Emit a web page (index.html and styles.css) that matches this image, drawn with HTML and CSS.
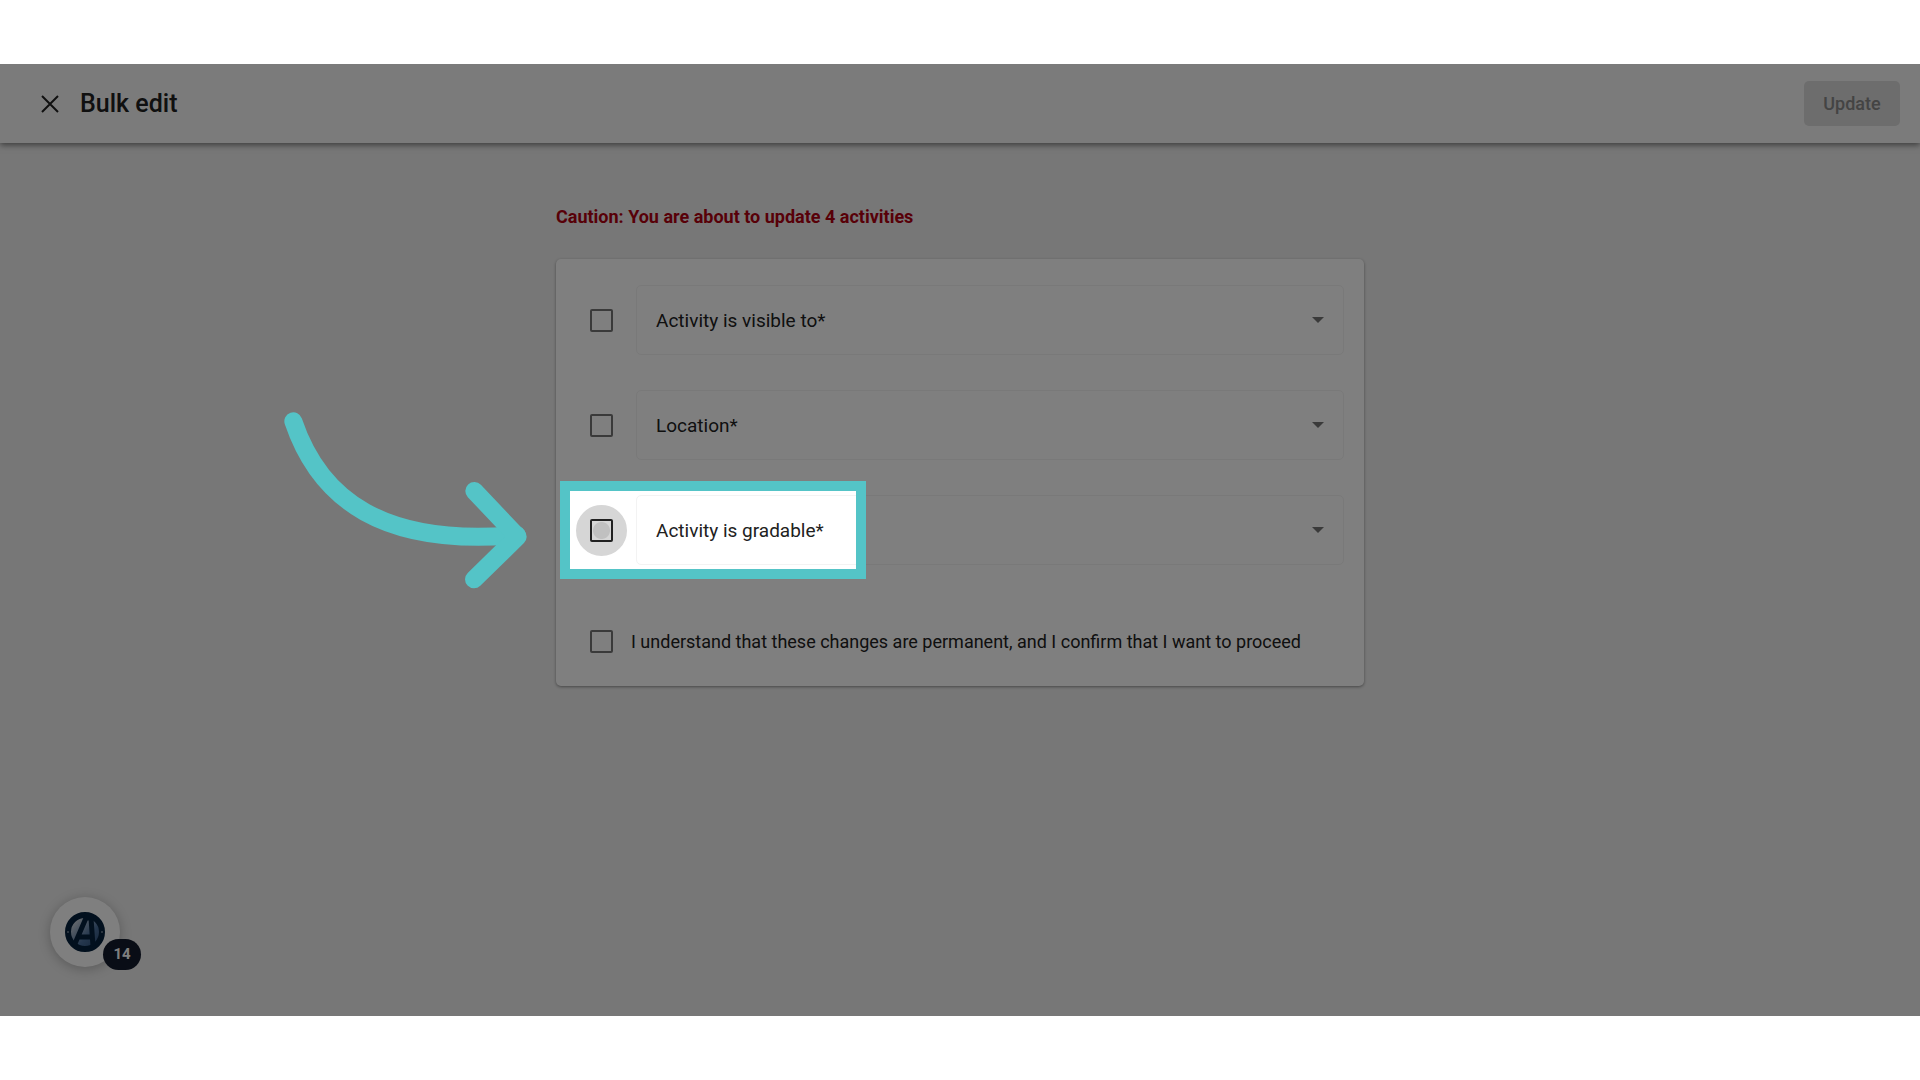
FILE: index.html
```html
<!DOCTYPE html>
<html lang="en">
<head>
<meta charset="utf-8">
<meta name="viewport" content="width=device-width, initial-scale=1">
<title>Bulk edit</title>
<link rel="stylesheet" href="styles.css">
</head>
<body>
<div class="stage">
  <header class="topbar">
    <button class="close" type="button" aria-label="Close">
      <svg viewBox="0 0 20 20" width="20" height="20" fill="none" stroke="currentColor" stroke-width="2"><path d="M2 2l16 16M18 2L2 18"/></svg>
    </button>
    <h1 class="title">Bulk edit</h1>
    <button class="update" type="button" disabled>Update</button>
  </header>
  <main class="content">
    <p class="caution">Caution: You are about to update 4 activities</p>
    <form class="card">
      <div class="row">
        <input class="check" type="checkbox" aria-label="Edit activity visibility">
        <div class="field">
          <select class="select" aria-label="Activity is visible to"><option>Activity is visible to*</option></select>
          <svg class="caret" viewBox="0 0 12 6" width="12" height="6"><path d="M0 0h12L6 6z" fill="currentColor"/></svg>
        </div>
      </div>
      <div class="row">
        <input class="check" type="checkbox" aria-label="Edit location">
        <div class="field">
          <select class="select" aria-label="Location"><option>Location*</option></select>
          <svg class="caret" viewBox="0 0 12 6" width="12" height="6"><path d="M0 0h12L6 6z" fill="currentColor"/></svg>
        </div>
      </div>
      <div class="row">
        <input class="check check-active" type="checkbox" aria-label="Edit gradable setting">
        <div class="field">
          <select class="select" aria-label="Activity is gradable"><option>Activity is gradable*</option></select>
          <svg class="caret" viewBox="0 0 12 6" width="12" height="6"><path d="M0 0h12L6 6z" fill="currentColor"/></svg>
        </div>
        <div class="spotlight"></div>
        <svg class="arrow" viewBox="0 0 810 600" width="270" height="200" fill="none" stroke="currentColor" stroke-width="54" stroke-linecap="round" stroke-linejoin="round">
          <path d="M70 64C150 300 340 440 740 405"/>
          <path d="M613 273L743 410L612 538"/>
        </svg>
      </div>
      <label class="confirm">
        <input class="check" type="checkbox">
        <span>I understand that these changes are permanent, and I confirm that I want to proceed</span>
      </label>
    </form>
  </main>
  <button class="helper" type="button" aria-label="Open help, 14 new">
    <svg viewBox="0 0 40 40" width="40" height="40">
      <defs><linearGradient id="disc" x1="0" y1="0" x2="1" y2="1"><stop offset="0.15" stop-color="#d5dae0"/><stop offset="0.6" stop-color="#4a6f9c"/><stop offset="1" stop-color="#24446c"/></linearGradient></defs>
      <circle cx="20" cy="20" r="17" fill="url(#disc)" stroke="#04203c" stroke-width="6"/>
      <path d="M9 34L21 6H26L28 34M14 25H27" fill="none" stroke="#04203c" stroke-width="5"/>
      <circle cx="3" cy="20" r="1" fill="#6f8296"/>
      <circle cx="37" cy="20" r="1" fill="#6f8296"/>
    </svg>
    <span class="count">14</span>
  </button>
</div>
</body>
</html>
```
FILE: styles.css
```css
* { box-sizing: border-box; }

body {
  margin: 0;
  padding: 64px 0;
  background: #fff;
  color: #212121;
  font-family: Roboto, "Liberation Sans", sans-serif;
  font-size: 18px;
}

button, select { font: inherit; }

.stage {
  position: relative;
  min-height: calc(100vh - 128px);
  overflow: hidden;
  background: #eee;
}

.topbar {
  display: flex;
  align-items: center;
  height: 79px;
  padding: 0 20px 0 40px;
  background: #f7f7f7;
  box-shadow: 0 2px 6px rgba(0, 0, 0, 0.5);
}

.close {
  display: flex;
  padding: 0;
  border: 0;
  background: none;
  color: #212121;
}

.title {
  margin: 0 auto 0 20px;
  font-size: 25px;
  font-weight: 500;
}

.update {
  width: 96px;
  height: 45px;
  padding: 0;
  border: 0;
  border-radius: 5px;
  background: #dadada;
  color: #888;
  font-weight: 500;
}

.content {
  max-width: 808px;
  margin: 0 auto;
  padding: 62px 0;
}

.caution {
  margin: 0 0 30px;
  color: #b00010;
  font-weight: 700;
  line-height: 24px;
}

.card {
  display: grid;
  gap: 35px;
  padding: 26px 20px 26px 34px;
  border-radius: 5px;
  background: #fff;
  box-shadow: 0 1px 3px rgba(0, 0, 0, 0.4);
}

.row {
  position: relative;
  display: flex;
  align-items: center;
  gap: 23px;
}

.check {
  appearance: none;
  flex: none;
  width: 23px;
  height: 23px;
  margin: 0;
  border: 2px solid #757575;
  border-radius: 2px;
}

/* Focus ripple around the box, with the darker press spot inside it */
.check-active {
  position: relative;
  border-color: #212121;
  background: radial-gradient(circle, #c0c0c0 8px, #d6d6d6 9px);
}

.check-active::before {
  content: "";
  position: absolute;
  inset: -16px;
  border: 14px solid #d6d6d6;
  border-radius: 50%;
}

.check-active::after {
  content: "";
  position: absolute;
  inset: -2px;
  border: 2px solid #212121;
  border-radius: 2px;
}

.field {
  position: relative;
  flex: 1;
}

.select {
  appearance: none;
  display: block;
  width: 100%;
  height: 70px;
  padding: 0 50px 0 19px;
  border: 1px solid #f3f3f3;
  border-radius: 5px;
  background: transparent;
  color: #212121;
  font-size: 19px;
}

.caret {
  position: absolute;
  top: 32px;
  right: 20px;
  color: #757575;
  pointer-events: none;
}

.confirm {
  display: flex;
  align-items: center;
  gap: 18px;
  height: 60px;
  padding-top: 22px;
}

/* Highlighted area: its shadow dims everything else on the stage */
.spotlight {
  position: absolute;
  z-index: 2;
  top: -14px;
  left: -30px;
  width: 306px;
  height: 98px;
  border: 10px solid #54c4c7;
  box-shadow: 0 0 0 3000px rgba(0, 0, 0, 0.5);
  pointer-events: none;
}

.arrow {
  position: absolute;
  z-index: 3;
  top: -95px;
  left: -320px;
  color: #54c4c7;
  pointer-events: none;
}

.helper {
  position: absolute;
  bottom: 49px;
  left: 50px;
  display: grid;
  place-items: center;
  width: 70px;
  height: 70px;
  padding: 0;
  border: 0;
  border-radius: 50%;
  background: #fff;
  box-shadow: 0 2px 12px rgba(0, 0, 0, 0.25);
}

.count {
  position: absolute;
  top: 42px;
  left: 53px;
  width: 38px;
  border-radius: 16px;
  background: #121a2c;
  color: #fff;
  font-size: 15px;
  font-weight: 700;
  line-height: 31px;
}
```
